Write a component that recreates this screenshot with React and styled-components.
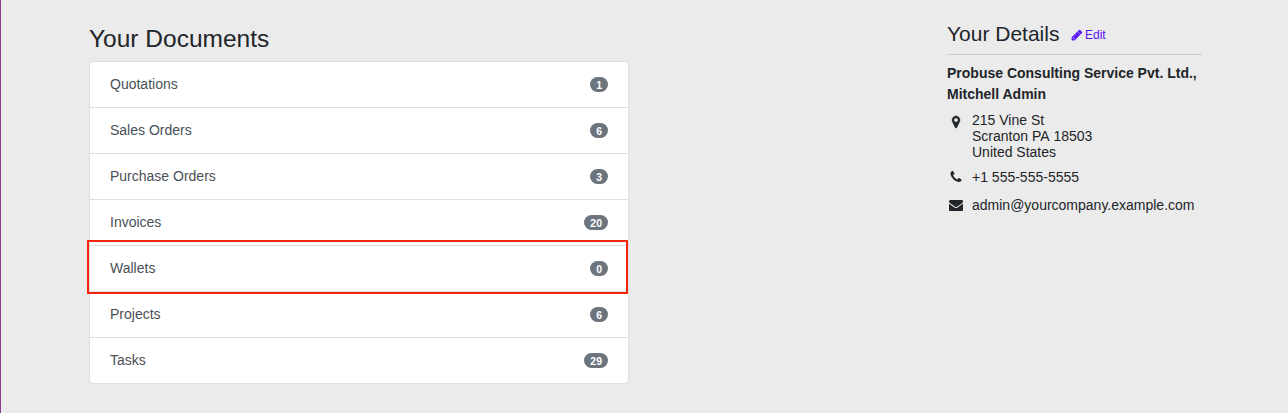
import React from "react";
import styled, { createGlobalStyle } from "styled-components";

const Global = createGlobalStyle`
  *, *::before, *::after { box-sizing: border-box; }
  body {
    margin: 0;
    background: #ebebeb;
    color: #212529;
    font-family: "Liberation Sans", Arial, sans-serif;
    font-size: 14px;
    line-height: 21px;
  }
`;
const Page = styled.main`
  display: flex;
  justify-content: space-between;
  align-items: flex-start;
  height: 413px;
  padding: 0 86px 0 88px;
  border-left: 1px solid #873a85;
`;
const Documents = styled.section`
  width: 540px;
  padding-top: 24px;
`;
const Title = styled.h3`
  margin: 0 0 8px;
  font-size: 24.5px;
  font-weight: 400;
  line-height: 29px;
`;
const List = styled.div`
  background: #fff;
  border: 1px solid #dfdfdf;
  border-radius: 4px;
`;
const Row = styled.a`
  position: relative;
  display: flex;
  align-items: center;
  justify-content: space-between;
  height: 46px;
  padding: 0 20px;
  color: #495057;
  border-bottom: 1px solid #dfdfdf;
  &:last-child {
    height: 45px;
    border-bottom: 0;
  }
`;
const Highlight = styled.span`
  position: absolute;
  inset: -6px 0 -3px -3px;
  border: 2px solid #f9230a;
`;
const Badge = styled.span`
  padding: 3px 6px 2px;
  border-radius: 10px;
  background: #6c757d;
  color: #fff;
  font-size: 10.5px;
  font-weight: 700;
  line-height: 10px;
`;
const Details = styled.aside`
  width: 255px;
  padding-top: 21px;
`;
const DetailsHead = styled.header`
  display: flex;
  align-items: center;
  height: 34px;
  padding-bottom: 8px;
  border-bottom: 1px solid #cdcdcd;
`;
const DetailsTitle = styled.h4`
  margin: 0;
  font-size: 21px;
  font-weight: 400;
  line-height: 25px;
`;
const Edit = styled.a`
  display: flex;
  align-items: center;
  gap: 2px;
  margin: 4px 0 0 11.5px;
  color: #5514f5;
  font-size: 12px;
`;
const Name = styled.div`
  padding-top: 8px;
  font-weight: 700;
`;
const Contact = styled.div`
  display: flex;
  margin-top: ${(p) => p.$gap}px;
  line-height: 16px;
`;
const IconBox = styled.span`
  display: flex;
  justify-content: center;
  width: 18px;
  margin-right: 7px;
  padding-top: ${(p) => p.$top || 0}px;
`;
const StateCode = styled.span`
  display: inline-block;
`;

const Glyph = styled.svg.attrs({ viewBox: "0 0 1792 1792", fill: "currentColor" })`
  display: block;
  flex: none;
  width: ${(p) => p.$size || 14}px;
  height: ${(p) => p.$size || 14}px;
  margin-bottom: ${(p) => p.$lift || 0}px;
  stroke: currentColor;
  stroke-width: ${(p) => p.$weight || 0};
`;
const Pencil = () => (
  <Glyph $size={12} $lift={2} $weight={60}>
    <path d="M491 1536l91-91-235-235-91 91v107h128v128h107zM1014 608q0-22-22-22-10 0-17 7l-542 542q-7 7-7 17 0 22 22 22 10 0 17-7l542-542q7-7 7-17zm-54-192l416 416-832 832h-416v-416zm683 96q0 53-37 90l-166 166-416-416 166-165q36-38 90-38 53 0 91 38l235 234q37 39 37 91z" />
  </Glyph>
);
const Marker = () => (
  <Glyph $weight={50}>
    <path d="M1152 640q0-106-75-181t-181-75-181 75-75 181 75 181 181 75 181-75 75-181zm256 0q0 109-33 179l-364 774q-16 33-47.5 52t-67.5 19-67.5-19-46.5-52l-365-774q-33-70-33-179 0-212 150-362t362-150 362 150 150 362z" />
  </Glyph>
);
const Phone = () => (
  <Glyph>
    <path d="M1600 1240q0 27-10 70.5t-21 68.5q-21 50-122 106-94 51-186 51-27 0-52.5-3.5t-57.5-12.5-47.5-14.5-55.5-20.5-49-18q-98-35-175-83-128-79-264.5-215.5t-215.5-264.5q-48-77-83-175-3-9-18-49t-20.5-55.5-14.5-47.5-12.5-57.5-3.5-52.5q0-92 51-186 56-101 106-122 25-11 68.5-21t70.5-10q14 0 21 3 18 6 53 76 11 19 30 54t35 63.5 31 53.5q3 4 17.5 25t21.5 35.5 7 28.5q0 20-28.5 50t-62 55-62 53-28.5 46q0 9 5 22.5t8.5 20.5 14 24 11.5 19q76 137 174 235t235 174q2 1 19 11.5t24 14 20.5 8.5 22.5 5q18 0 46-28.5t53-62 55-62 50-28.5q14 0 28.5 7t35.5 21.5 25 17.5q25 15 53.5 31t63.5 35 54 30q70 35 76 53 3 7 3 21z" />
  </Glyph>
);
const Mail = () => (
  <Glyph>
    <path d="M1792 710v794q0 66-47 113t-113 47h-1472q-66 0-113-47t-47-113v-794q44 49 101 87 362 246 497 345 57 42 92.5 65.5t94.5 48 110 24.5h2q51 0 110-24.5t94.5-48 92.5-65.5q170-123 498-345 57-39 100-87zm0-294q0 79-49 151t-122 123q-376 261-468 325-10 7-42.5 31t-54 38.5-52 32.5-57.5 27-50 9h-2q-23 0-50-9t-57.5-27-52-32.5-54-38.5-42.5-31q-91-64-262-182.5t-205-142.5q-62-42-117-115.5t-55-136.5q0-78 41.5-130t118.5-52h1472q65 0 112.5 47t47.5 113z" />
  </Glyph>
);

const documents = [
  ["Quotations", 1], ["Sales Orders", 6], ["Purchase Orders", 3],
  ["Invoices", 20], ["Wallets", 0], ["Projects", 6], ["Tasks", 29],
];

export default function App() {
  return (
    <>
      <Global />
      <Page>
        <Documents>
          <Title>Your Documents</Title>
          <List>
            {documents.map(([name, count]) => (
              <Row key={name}>
                {name}
                <Badge>{count}</Badge>
                {name === "Wallets" && <Highlight />}
              </Row>
            ))}
          </List>
        </Documents>
        <Details>
          <DetailsHead>
            <DetailsTitle>Your Details</DetailsTitle>
            <Edit><Pencil />Edit</Edit>
          </DetailsHead>
          <Name>Probuse Consulting Service Pvt. Ltd.,<br />Mitchell Admin</Name>
          <Contact $gap={7}>
            <IconBox $top={3}><Marker /></IconBox>
            <span>215 Vine St<br />Scranton <StateCode>PA</StateCode> 18503<br />United States</span>
          </Contact>
          <Contact $gap={9}><IconBox $top={1}><Phone /></IconBox>+1 555-555-5555</Contact>
          <Contact $gap={12}><IconBox $top={1}><Mail /></IconBox>admin@yourcompany.example.com</Contact>
        </Details>
      </Page>
    </>
  );
}
